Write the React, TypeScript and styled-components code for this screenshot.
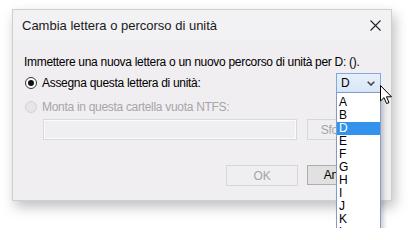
import React from "react";
import styled, { createGlobalStyle } from "styled-components";

const GlobalStyle = createGlobalStyle`
  html, body {
    margin: 0;
    padding: 0;
    background: #ffffff;
  }
  body {
    font-family: "Liberation Sans", Arial, sans-serif;
    font-size: 12px;
    color: #000;
  }
`;

const Page = styled.div`
  width: 408px;
  height: 228px;
  overflow: hidden;
  box-sizing: border-box;
  padding: 9px 0 0 12px;
  background: #ffffff;
`;

const Window = styled.div`
  width: 380px;
  height: 192px;
  box-sizing: border-box;
  border: 1px solid #cfcfd2;
  background: #f0eef1;
  box-shadow: 3px 6px 12px rgba(0, 0, 0, 0.25);
  display: flex;
  flex-direction: column;
`;

const TitleBar = styled.div`
  height: 30px;
  display: flex;
  align-items: center;
  justify-content: space-between;
  padding: 0 10px 0 9px;
  background: #f2f1f4;
`;

const Title = styled.span`
  font-size: 13px;
  color: #1a1a1a;
`;

const Body = styled.div`
  display: flex;
  flex-direction: column;
  padding: 15px 10px 0 11px;
`;

const Instruction = styled.div`
  line-height: 14px;
  letter-spacing: -0.3px;
`;

const RadioRow = styled.div<{ top: number }>`
  display: flex;
  align-items: center;
  justify-content: space-between;
  margin-top: ${(p) => p.top}px;
  height: ${(p) => (p.top < 6 ? 20 : 14)}px;
`;

const RadioLabel = styled.label<{ disabled?: boolean }>`
  display: flex;
  align-items: center;
  gap: 5px;
  letter-spacing: -0.3px;
  color: ${(p) => (p.disabled ? "#a6a6a6" : "#000")};
`;

const RadioDot = styled.span<{ checked?: boolean; disabled?: boolean }>`
  width: 12px;
  height: 12px;
  box-sizing: border-box;
  border-radius: 50%;
  border: 1px solid ${(p) => (p.disabled ? "#d2d2d4" : "#333")};
  background: ${(p) => (p.disabled ? "#e6e5e8" : "#fff")};
  display: flex;
  align-items: center;
  justify-content: center;
  margin-left: 1px;
  &::after {
    content: "";
    width: 6px;
    height: 6px;
    border-radius: 50%;
    background: ${(p) => (p.checked ? "#111" : "transparent")};
  }
`;

const ComboWrap = styled.div`
  position: relative;
  width: 45px;
  height: 20px;
`;

const Combo = styled.div`
  width: 100%;
  height: 100%;
  box-sizing: border-box;
  border: 1px solid #7fa9df;
  background: linear-gradient(#e7f0fb, #d9e7f7);
  display: flex;
  align-items: center;
  justify-content: space-between;
  padding: 0 5px 0 4px;
`;

const ListBox = styled.ul`
  position: absolute;
  left: 0;
  top: 19px;
  width: 45px;
  height: 160px;
  margin: 0;
  padding: 3px 0 0;
  list-style: none;
  box-sizing: border-box;
  background: #fff;
  border: 1px solid #7f9ccc;
  box-shadow: 3px 2px 4px rgba(0, 0, 0, 0.18);
  z-index: 2;
`;

const ListItem = styled.li<{ selected?: boolean }>`
  height: 13px;
  line-height: 13px;
  padding-left: 2px;
  font-size: 12px;
  background: ${(p) => (p.selected ? "#3392ec" : "transparent")};
  color: ${(p) => (p.selected ? "#fff" : "#000")};
`;

const Cursor = styled.svg`
  position: absolute;
  left: 44px;
  top: 12px;
  z-index: 3;
`;

const InputRow = styled.div`
  display: flex;
  gap: 10px;
  margin: 5px 0 0 19px;
`;

const TextBox = styled.div`
  width: 254px;
  height: 21px;
  box-sizing: border-box;
  border: 1px solid #d9d8dc;
  box-shadow: inset 0 0 0 1px #fbfbfc;
  background: #efeef1;
`;

const Button = styled.div<{ disabled?: boolean }>`
  width: 72px;
  height: ${(p) => (p.disabled ? 21 : 20)}px;
  box-sizing: border-box;
  border: 1px solid ${(p) => (p.disabled ? "#d7d6da" : "#adadad")};
  background: ${(p) => (p.disabled ? "#efeef1" : "#e1e1e1")};
  color: ${(p) => (p.disabled ? "#a3a3a3" : "#000")};
  display: flex;
  align-items: center;
  justify-content: center;
  letter-spacing: -0.2px;
`;

const ButtonRow = styled.div`
  display: flex;
  justify-content: flex-end;
  gap: 9px;
  margin-top: 25px;
  padding-right: 2px;
`;

const letters = ["A", "B", "D", "E", "F", "G", "H", "I", "J", "K", "L"];

export default function App() {
  return (
    <>
      <GlobalStyle />
      <Page>
        <Window>
          <TitleBar>
            <Title>Cambia lettera o percorso di unità</Title>
            <svg width="11" height="11" viewBox="0 0 11 11">
              <path d="M0.5 0.5 L10.5 10.5 M10.5 0.5 L0.5 10.5" stroke="#222" strokeWidth="1.1" />
            </svg>
          </TitleBar>
          <Body>
            <Instruction>
              Immettere una nuova lettera o un nuovo percorso di unità per D: ().
            </Instruction>
            <RadioRow top={4}>
              <RadioLabel>
                <RadioDot checked />
                Assegna questa lettera di unità:
              </RadioLabel>
              <ComboWrap>
                <Combo>
                  <span>D</span>
                  <svg width="8" height="5" viewBox="0 0 8 5">
                    <path d="M0.7 0.7 L4 4 L7.3 0.7" stroke="#444" strokeWidth="1.6" fill="none" />
                  </svg>
                </Combo>
                <ListBox>
                  {letters.map((l) => (
                    <ListItem key={l} selected={l === "D"}>
                      {l}
                    </ListItem>
                  ))}
                </ListBox>
                <Cursor width="13" height="20" viewBox="0 0 13 20">
                  <path
                    d="M0.5 0.5 L0.5 16 L4 12.6 L6.6 18.6 L9 17.6 L6.5 11.8 L11.5 11.8 Z"
                    fill="#fff"
                    stroke="#000"
                    strokeWidth="1"
                    strokeLinejoin="round"
                  />
                </Cursor>
              </ComboWrap>
            </RadioRow>
            <RadioRow top={7}>
              <RadioLabel disabled>
                <RadioDot disabled />
                Monta in questa cartella vuota NTFS:
              </RadioLabel>
            </RadioRow>
            <InputRow>
              <TextBox />
              <Button disabled>Sfoglia...</Button>
            </InputRow>
            <ButtonRow>
              <Button disabled>OK</Button>
              <Button>Annulla</Button>
            </ButtonRow>
          </Body>
        </Window>
      </Page>
    </>
  );
}
